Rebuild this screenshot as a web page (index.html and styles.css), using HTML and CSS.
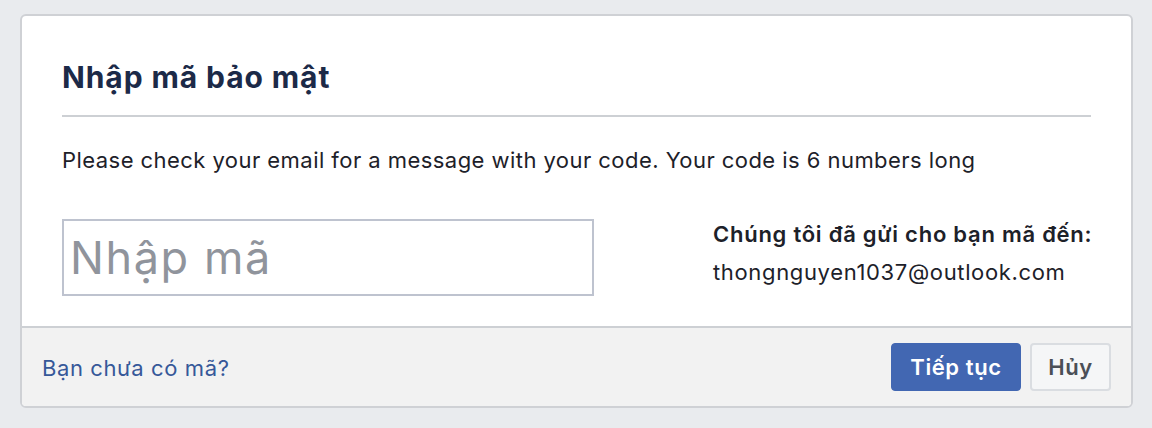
FILE: index.html
```html
<!DOCTYPE html>
<html lang="vi">
<head>
<meta charset="utf-8">
<title>Nhập mã bảo mật</title>
<link rel="stylesheet" href="styles.css">
</head>
<body>
<div class="card">
  <div class="content">
    <h2 class="title">Nhập mã bảo mật</h2>
    <p class="desc">Please check your email for a message with your code. Your code is 6 numbers long</p>
    <div class="row">
      <input class="code" type="text" placeholder="Nhập mã">
      <div class="sent">
        <div class="sent-label">Chúng tôi đã gửi cho bạn mã đến:</div>
        <div class="sent-email">thongnguyen1037@outlook.com</div>
      </div>
    </div>
  </div>
  <div class="footer">
    <a class="nocode" href="#">Bạn chưa có mã?</a>
    <div class="actions">
      <button class="btn btn-primary">Tiếp tục</button>
      <button class="btn btn-cancel">Hủy</button>
    </div>
  </div>
</div>
</body>
</html>
```
FILE: styles.css
```css
html, body {
  margin: 0;
  padding: 0;
}
body {
  background: #e9ebee;
  font-family: Inter, "Liberation Sans", Arial, sans-serif;
  color: #1d2129;
  width: 1152px;
  height: 428px;
  overflow: hidden;
}
.card {
  box-sizing: border-box;
  margin: 14px 0 0 20px;
  width: 1113px;
  height: 394px;
  background: #fff;
  border: 2px solid #cfd1d5;
  border-radius: 6px;
  overflow: hidden;
  display: flex;
  flex-direction: column;
}
.content {
  padding: 45px 40px 0 40px;
  height: 310px;
  box-sizing: border-box;
}
.title {
  margin: 0;
  font-size: 30px;
  line-height: 32px;
  font-weight: 700;
  letter-spacing: 0.9px;
  color: #1c2a48;
  padding-bottom: 22px;
  border-bottom: 2px solid #cdd0d4;
}
.desc {
  margin: 30px 0 0 0;
  font-size: 22px;
  line-height: 26px;
  letter-spacing: 0.45px;
}
.row {
  display: flex;
  align-items: flex-start;
  margin-top: 46px;
}
.code {
  box-sizing: border-box;
  flex: 0 0 532px;
  width: 532px;
  height: 77px;
  margin: 0;
  border: 2px solid #bec3cf;
  padding: 0 6px;
  font-family: Inter, "Liberation Sans", Arial, sans-serif;
  font-size: 45px;
  letter-spacing: 1.6px;
  color: #1d2129;
  outline: none;
}
.code::placeholder {
  color: #90949c;
}
.sent {
  margin-left: 119px;
  font-size: 22px;
  line-height: 38px;
  margin-top: -4px;
  white-space: nowrap;
}
.sent-label {
  font-weight: 600;
  letter-spacing: 0.75px;
}
.sent-email {
  letter-spacing: 0.65px;
}
.footer {
  flex: 1;
  background: #f2f2f2;
  border-top: 2px solid #cdd0d4;
  display: flex;
  align-items: center;
  justify-content: space-between;
  padding: 0 20px;
}
.nocode {
  color: #365899;
  text-decoration: none;
  font-size: 22px;
  letter-spacing: 0.6px;
  margin-top: 2px;
}
.actions {
  display: flex;
  gap: 9px;
}
.btn {
  box-sizing: border-box;
  height: 48px;
  border-radius: 4px;
  font-family: Inter, "Liberation Sans", Arial, sans-serif;
  font-size: 22px;
  font-weight: 600;
  letter-spacing: 0.6px;
  padding: 0;
  cursor: pointer;
}
.btn-primary {
  width: 130px;
  background: #4267b2;
  border: 1px solid #4267b2;
  color: #fff;
}
.btn-cancel {
  width: 81px;
  background: #f5f6f7;
  border: 2px solid #dadde1;
  color: #4b4f56;
}
```
